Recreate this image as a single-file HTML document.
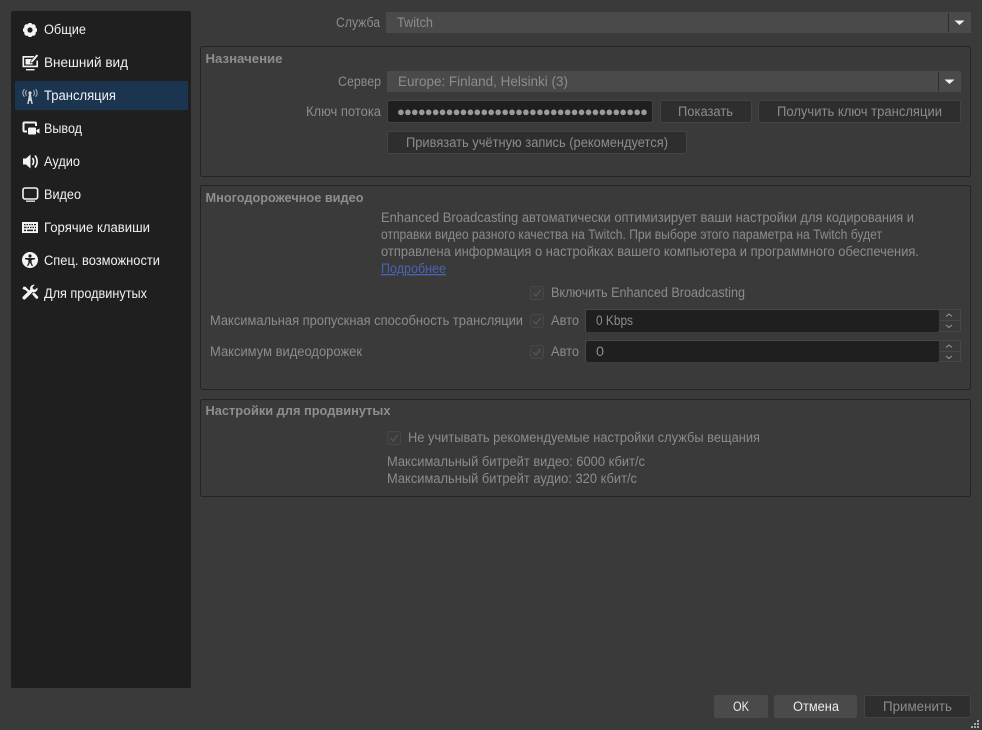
<!DOCTYPE html>
<html lang="ru">
<head>
<meta charset="utf-8">
<title>Настройки</title>
<style>
html,body{margin:0;padding:0;background:#3a3a3a;width:982px;height:730px;overflow:hidden}
svg{display:block}
text{font-family:"Liberation Sans","DejaVu Sans",sans-serif;font-size:13.5px;fill:#8c8c8c}
.n{fill:#f1f1f1;font-size:13.5px}
.b{font-weight:bold;fill:#8e8e8e;font-size:13px}
.g{fill:none;stroke:#242424;stroke-width:1}
.cb{fill:#3c3c3c;stroke:#474747}
.ck{fill:none;stroke:#565656;stroke-width:1.3}
</style>
</head>
<body>
<svg width="982" height="730" viewBox="0 0 982 730" xmlns="http://www.w3.org/2000/svg">
<rect width="982" height="730" fill="#3a3a3a"/>

<!-- sidebar -->
<rect x="11" y="11" width="180" height="677" rx="2" fill="#1f1f1f"/>
<rect x="15" y="81" width="173" height="29" rx="2" fill="#1b3550"/>

<text class="n" x="44" y="34" textLength="42" lengthAdjust="spacingAndGlyphs">Общие</text>
<text class="n" x="44" y="67" textLength="84" lengthAdjust="spacingAndGlyphs">Внешний вид</text>
<text class="n" x="44" y="100" textLength="72" lengthAdjust="spacingAndGlyphs">Трансляция</text>
<text class="n" x="44" y="133" textLength="38" lengthAdjust="spacingAndGlyphs">Вывод</text>
<text class="n" x="44" y="166" textLength="36" lengthAdjust="spacingAndGlyphs">Аудио</text>
<text class="n" x="44" y="199" textLength="37" lengthAdjust="spacingAndGlyphs">Видео</text>
<text class="n" x="44" y="232" textLength="106" lengthAdjust="spacingAndGlyphs">Горячие клавиши</text>
<text class="n" x="44" y="265" textLength="116" lengthAdjust="spacingAndGlyphs">Спец. возможности</text>
<text class="n" x="44" y="298" textLength="103" lengthAdjust="spacingAndGlyphs">Для продвинутых</text>

<!-- icons -->
<g fill="#f4f4f4">
  <!-- gear -->
  <g transform="translate(30,30)">
    <circle r="4.6" fill="none" stroke="#f4f4f4" stroke-width="3.4"/>
    <g>
      <rect x="-1.7" y="-7" width="3.4" height="14" rx=".6"/>
      <rect x="-1.7" y="-7" width="3.4" height="14" rx=".6" transform="rotate(45)"/>
      <rect x="-1.7" y="-7" width="3.4" height="14" rx=".6" transform="rotate(90)"/>
      <rect x="-1.7" y="-7" width="3.4" height="14" rx=".6" transform="rotate(135)"/>
    </g>
    <circle r="2.6" fill="#1f1f1f"/>
  </g>
  <!-- appearance: monitor with pencil -->
  <path d="M22.500 56h12v1.600H24.100v8h12.300v-5h1.600v6.600H22.500z"/>
  <rect x="25.500" y="59" width="7" height="5.500"/>
  <path d="M31 60.500l5.600-6.500 2 1.600-5.600 6.600-2.600.8z" stroke="#1f1f1f" stroke-width=".6"/>
  <rect x="26" y="69" width="8.500" height="1.400"/>
  <!-- broadcast -->
  <path d="M29.200 93.500h1.600l2 10.500h-1.500l-.5-3h-1.600l-.5 3h-1.500z" fill="#cfd5da"/>
  <circle cx="30" cy="93" r="1.600" fill="#cfd5da"/>
  <g fill="none" stroke="#aeb7be" stroke-width="1">
    <path d="M26.600 90.200c-1.400 1.600-1.400 4 0 5.600"/>
    <path d="M33.400 90.200c1.400 1.600 1.400 4 0 5.600"/>
    <path d="M24.400 89.200c-2 2.400-2 5.200 0 7.600"/>
    <path d="M35.600 89.200c2 2.400 2 5.200 0 7.600"/>
  </g>
  <!-- output -->
  <path d="M24.500 121.500h10.500a2 2 0 0 1 2 2v2.500h-2v-2.500H24.500v7h2.500v2h-2.500a2 2 0 0 1-2-2v-7a2 2 0 0 1 2-2z"/>
  <rect x="28" y="127.500" width="8" height="7" rx="1"/>
  <path d="M36.500 130l3-1.500v5l-3-1.500z"/>
  <!-- audio -->
  <path d="M23 158.500h3l4.500-4v14l-4.500-4h-3z"/>
  <g fill="none" stroke="#f4f4f4" stroke-width="1.700">
    <path d="M32.500 158c1.500 2 1.500 5 0 7"/>
    <path d="M35 155.500c2.800 3.500 2.800 8.500 0 12"/>
  </g>
  <!-- video -->
  <rect x="23" y="188" width="14.600" height="11" rx="2" fill="none" stroke="#f4f4f4" stroke-width="1.600"/>
  <rect x="26" y="200.500" width="9" height="1.300"/>
  <!-- keyboard -->
  <path fill-rule="evenodd" d="M22 222h16v11H22zM24 224v1.300h1.500V224zM26.500 224v1.300H28V224zM29 224v1.300h1.500V224zM31.500 224v1.300H33V224zM34 224v1.300h2V224zM24 226.800v1.300h2.500v-1.300zM27.500 226.800v1.300H29v-1.300zM30 226.800v1.300h1.500v-1.300zM32.500 226.800v1.300H34v-1.300zM35 226.800v1.300h1v-1.300zM24 229.600v1.500h2v-1.500zM27 229.600v1.500h6v-1.500zM34 229.600v1.500h2v-1.500z"/>
  <!-- accessibility -->
  <circle cx="30" cy="260" r="8"/>
  <g fill="#1f1f1f">
    <circle cx="30" cy="256" r="1.600"/>
    <path d="M25 258h10v1.300l-3.400.7v2.500l1.400 3.500h-1.300l-1.700-3.500-1.700 3.500h-1.300l1.400-3.500V260l-3.400-.7z"/>
  </g>
  <!-- tools -->
  <path d="M23 288l2-1.500 6.500 6-1.500 1.500z"/>
  <path d="M23.500 286.500l3 1-1 2.500-3-1z"/>
  <path d="M37.500 287.500a3.800 3.800 0 0 1-4.800 4.500L25.500 299a1.700 1.700 0 0 1-2.500-2.500l7.200-7a3.800 3.800 0 0 1 4.600-4.700l-2.300 2.300.5 2 2 .5z"/>
  <path d="M32 294l1.800-1.800 4.200 4.300a1.500 1.500 0 0 1-2 2.100z"/>
</g>

<!-- top service combo -->
<text x="336" y="27" textLength="44" lengthAdjust="spacingAndGlyphs">Служба</text>
<rect x="386" y="12" width="585" height="21" fill="#4a4a4a"/>
<rect x="948" y="13" width="1" height="19" fill="#2c2c2c"/>
<path d="M954.500 20.500h10l-5 4.500z" fill="#f0f0f0"/>
<text x="397" y="27" textLength="36" lengthAdjust="spacingAndGlyphs">Twitch</text>

<!-- group 1 -->
<rect class="g" x="200.500" y="46.500" width="770" height="130" rx="2"/>
<text class="b" x="205.500" y="63" textLength="77" lengthAdjust="spacingAndGlyphs">Назначение</text>
<text x="338" y="86" textLength="43" lengthAdjust="spacingAndGlyphs">Сервер</text>
<rect x="387" y="71" width="574" height="21" fill="#4a4a4a"/>
<rect x="938" y="72" width="1" height="19" fill="#2c2c2c"/>
<path d="M944.500 79.500h10l-5 4.500z" fill="#f0f0f0"/>
<text x="398" y="86" textLength="170" lengthAdjust="spacingAndGlyphs">Europe: Finland, Helsinki (3)</text>

<text x="306" y="116" textLength="75" lengthAdjust="spacingAndGlyphs">Ключ потока</text>
<rect x="387.500" y="100.500" width="265" height="22" rx="2" fill="#1f1f1f" stroke="#454545"/>
<text x="397" y="116" textLength="251" style="font-size:13px;fill:#9a9a9a">●●●●●●●●●●●●●●●●●●●●●●●●●●●●●●●●●●●●</text>
<rect x="660.500" y="100.500" width="91" height="22" rx="2" fill="#2e2e2e" stroke="#444"/>
<text x="678" y="116" textLength="55" lengthAdjust="spacingAndGlyphs">Показать</text>
<rect x="758.500" y="100.500" width="202" height="22" rx="2" fill="#2e2e2e" stroke="#444"/>
<text x="777" y="116" textLength="165" lengthAdjust="spacingAndGlyphs">Получить ключ трансляции</text>
<rect x="387.500" y="131.500" width="299" height="22" rx="2" fill="#2e2e2e" stroke="#444"/>
<text x="406" y="147" textLength="262" lengthAdjust="spacingAndGlyphs">Привязать учётную запись (рекомендуется)</text>

<!-- group 2 -->
<rect class="g" x="200.500" y="185.500" width="770" height="204" rx="2"/>
<text class="b" x="205.500" y="202" textLength="158" lengthAdjust="spacingAndGlyphs">Многодорожечное видео</text>
<text x="381" y="222" textLength="533" lengthAdjust="spacingAndGlyphs">Enhanced Broadcasting автоматически оптимизирует ваши настройки для кодирования и</text>
<text x="381" y="239" textLength="501" lengthAdjust="spacingAndGlyphs">отправки видео разного качества на Twitch. При выборе этого параметра на Twitch будет</text>
<text x="381" y="256" textLength="538" lengthAdjust="spacingAndGlyphs">отправлена информация о настройках вашего компьютера и программного обеспечения.</text>
<text x="381" y="273" textLength="65" lengthAdjust="spacingAndGlyphs" style="fill:#4a63b0" text-decoration="underline">Подробнее</text>

<rect class="cb" x="530.500" y="286.500" width="13" height="13" rx="2"/>
<path class="ck" d="M533.500 293l2.500 3 4.500-6"/>
<text x="551" y="297" textLength="194" lengthAdjust="spacingAndGlyphs">Включить Enhanced Broadcasting</text>

<text x="210" y="325" textLength="313" lengthAdjust="spacingAndGlyphs">Максимальная пропускная способность трансляции</text>
<rect class="cb" x="530.500" y="314.500" width="13" height="13" rx="2"/>
<path class="ck" d="M533.500 321l2.500 3 4.500-6"/>
<text x="551" y="325" textLength="28" lengthAdjust="spacingAndGlyphs">Авто</text>
<rect x="585.500" y="309.500" width="375" height="22" fill="#3a3a3a" stroke="#474747"/>
<rect x="586" y="310" width="353" height="22" rx="2" fill="#1f1f1f"/>
<rect x="939" y="320" width="21" height="1" fill="#474747"/>
<path d="M946 316.500l3-2.500 3 2.500M946 325l3 2.500 3-2.500" fill="none" stroke="#9a9a9a"/>
<text x="596" y="325" textLength="37" lengthAdjust="spacingAndGlyphs">0 Kbps</text>

<text x="210" y="356" textLength="152" lengthAdjust="spacingAndGlyphs">Максимум видеодорожек</text>
<rect class="cb" x="530.500" y="345.500" width="13" height="13" rx="2"/>
<path class="ck" d="M533.500 352l2.500 3 4.500-6"/>
<text x="551" y="356" textLength="28" lengthAdjust="spacingAndGlyphs">Авто</text>
<rect x="585.500" y="340.500" width="375" height="21" fill="#3a3a3a" stroke="#474747"/>
<rect x="586" y="341" width="353" height="21" rx="2" fill="#1f1f1f"/>
<rect x="939" y="351" width="21" height="1" fill="#474747"/>
<path d="M946 347.500l3-2.500 3 2.500M946 356l3 2.500 3-2.500" fill="none" stroke="#9a9a9a"/>
<text x="596" y="356" textLength="8" lengthAdjust="spacingAndGlyphs">0</text>

<!-- group 3 -->
<rect class="g" x="200.500" y="399.500" width="770" height="97" rx="2"/>
<text class="b" x="205.500" y="415" textLength="185" lengthAdjust="spacingAndGlyphs">Настройки для продвинутых</text>
<rect class="cb" x="387.500" y="431.500" width="13" height="13" rx="2"/>
<path class="ck" d="M390.500 438l2.500 3 4.500-6"/>
<text x="408" y="442" textLength="352" lengthAdjust="spacingAndGlyphs">Не учитывать рекомендуемые настройки службы вещания</text>
<text x="387" y="466" textLength="258" lengthAdjust="spacingAndGlyphs">Максимальный битрейт видео: 6000 кбит/с</text>
<text x="387" y="483" textLength="250" lengthAdjust="spacingAndGlyphs">Максимальный битрейт аудио: 320 кбит/с</text>

<!-- bottom buttons -->
<rect x="714" y="695" width="54" height="23" rx="2" fill="#4a4a4a"/>
<text x="733" y="711" textLength="16" lengthAdjust="spacingAndGlyphs" style="fill:#ececec">OK</text>
<rect x="774" y="695" width="83" height="23" rx="2" fill="#4a4a4a"/>
<text x="793" y="711" textLength="46" lengthAdjust="spacingAndGlyphs" style="fill:#ececec">Отмена</text>
<rect x="864.500" y="695.500" width="106" height="22" rx="2" fill="#2e2e2e" stroke="#444"/>
<text x="883" y="711" textLength="69" lengthAdjust="spacingAndGlyphs">Применить</text>

<!-- size grip -->
<g fill="#a8a8a8">
  <rect x="977" y="720" width="2" height="2"/>
  <rect x="974" y="723" width="2" height="2"/>
  <rect x="977" y="723" width="2" height="2"/>
  <rect x="971" y="726" width="2" height="2"/>
  <rect x="974" y="726" width="2" height="2"/>
  <rect x="977" y="726" width="2" height="2"/>
</g>
</svg>
</body>
</html>
